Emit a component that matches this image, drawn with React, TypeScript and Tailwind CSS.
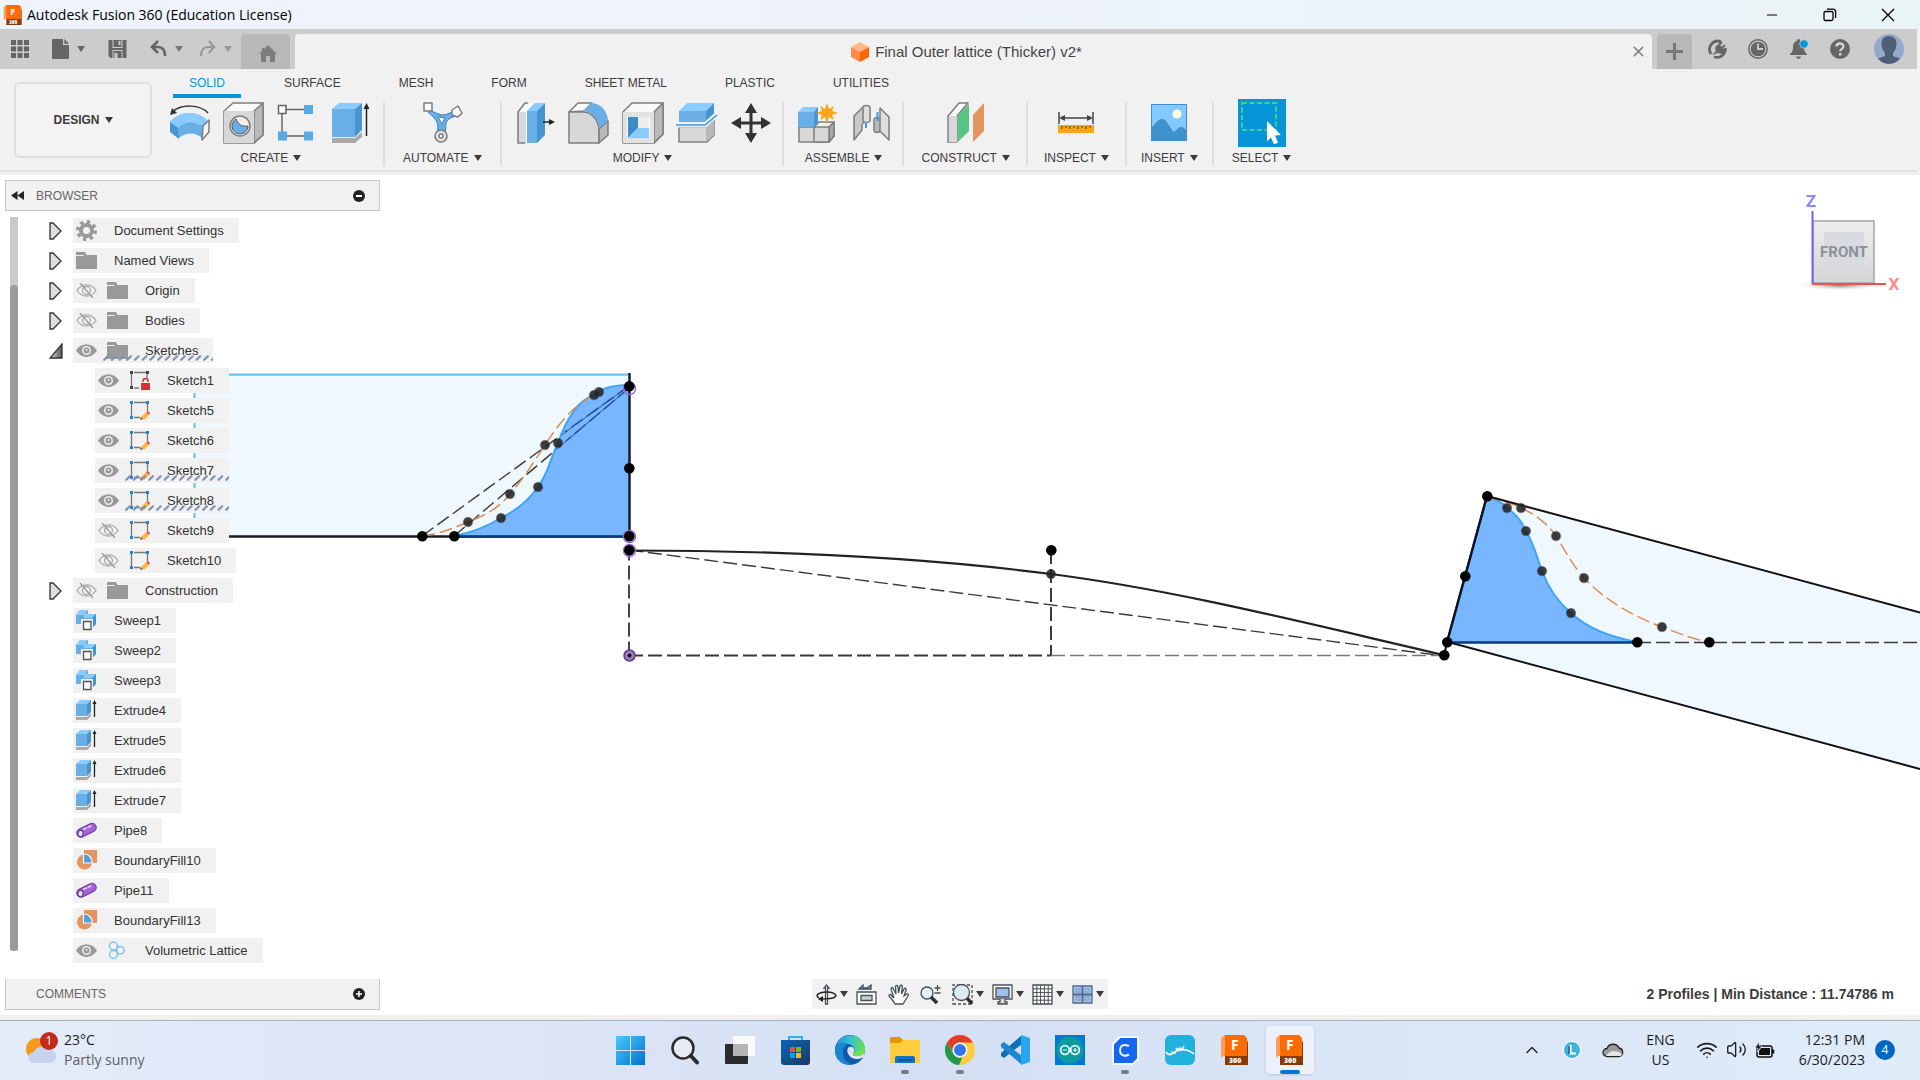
import React, { useState } from 'react';
import { Minus, X, ChevronUp, Wifi, Volume2 } from 'lucide-react';

/* ---------- small shared bits ---------- */

const Caret = ({ className = 'text-[#3c3c3c]' }: { className?: string }) => (
  <svg width="8" height="6" viewBox="0 0 8 6" className={`shrink-0 ${className}`}>
    <path d="M0 0h8L4 6z" fill="currentColor" />
  </svg>
);

const FusionLogo = ({ size }: { size: number }) => (
  <svg width={size} height={size} viewBox="0 0 30 30">
    <path d="M28 5v25H5v-9h18z" fill="#8a3a06" />
    <path d="M4 0h20l3 3v18H4z" fill="#ff6b00" />
    <path d="M1 3 5 0v20l-4 3z" fill="#ff9d5c" />
    <text x="11" y="15" fontSize="14" fontWeight="700" fill="#fff" fontFamily="Open Sans, sans-serif">F</text>
    <text x="9" y="28" fontSize="7" fontWeight="800" fill="#fff" fontFamily="Open Sans, sans-serif">360</text>
  </svg>
);

const Tool = ({ label, children, active }: { label: string; children: React.ReactNode; active?: boolean }) => (
  <button
    type="button"
    aria-label={label}
    className={active ? 'flex w-12 h-12 -my-[3px] items-center justify-center bg-[#0696d7]' : 'flex w-[42px] h-[42px] items-center justify-center'}
  >
    <svg width="42" height="42" viewBox="0 0 42 42" fill="none">{children}</svg>
  </button>
);

const Group = ({ label, children, pad = 'pl-3 pr-2.5', last }: { label: string; children: React.ReactNode; pad?: string; last?: boolean }) => (
  <div className={`flex flex-col items-center h-16 ${pad} ${last ? '' : 'border-r-2 border-[#dedede]'}`}>
    <div className="flex gap-3">{children}</div>
    <button type="button" className="flex items-center gap-[5px] px-1.5 mt-[5px] text-xs leading-[18px] text-[#3c3c3c]">
      {label}
      <Caret />
    </button>
  </div>
);

/* ---------- title bar and document tabs ---------- */

const TitleBar = () => (
  <header className="flex items-center h-[29px] bg-linear-to-r from-[#eff3fb] via-[#eef3fb] to-[#e9f4f6] text-black">
    <span className="pl-[3px] pr-1"><FusionLogo size={20} /></span>
    <h1 className="flex-1 text-[14px] leading-5 font-['Open_Sans',sans-serif]">Autodesk Fusion 360 (Education License)</h1>
    <button type="button" aria-label="Minimize" className="flex w-[58px] justify-center"><Minus size={16} strokeWidth={1.5} /></button>
    <button type="button" aria-label="Restore" className="flex w-[58px] justify-center">
      <svg width="14" height="14" viewBox="0 0 14 14" fill="none" stroke="#000" strokeWidth="1.3">
        <rect x="1" y="3.5" width="9" height="9" rx="1.5" />
        <path d="M4 1.2h6a2.6 2.6 0 0 1 2.6 2.6V10" />
      </svg>
    </button>
    <button type="button" aria-label="Close" className="flex w-[58px] justify-center mr-[3px]">
      <svg width="14" height="14" viewBox="0 0 14 14" stroke="#000" strokeWidth="1.3"><path d="m1 1 12 12M13 1 1 13" /></svg>
    </button>
  </header>
);

const QuickAccess = () => (
  <div className="flex h-10 items-end bg-[#cccccc] mr-[3px] text-[#666]">
    <div className="flex h-10 w-[241px] items-center pl-[11px]">
      <button type="button" aria-label="Data panel" className="mr-[23px]">
        <svg width="18" height="18" viewBox="0 0 18 18" fill="currentColor">
          {[0, 6.5, 13].map(y => [0, 6.5, 13].map(x => <rect key={`${x}-${y}`} x={x} y={y} width="5" height="5" />))}
        </svg>
      </button>
      <button type="button" aria-label="File" className="flex items-center gap-2 mr-[23px]">
        <svg width="17" height="20" viewBox="0 0 17 20" fill="currentColor">
          <path d="M1 0h10v6h6v13a1 1 0 0 1-1 1H1a1 1 0 0 1-1-1V1a1 1 0 0 1 1-1z" />
          <path d="m12.300 0 4.700 4.700h-4.700z" />
        </svg>
        <Caret className="text-[#666]" />
      </button>
      <button type="button" aria-label="Save" className="mr-[23px]">
        <svg width="19" height="18" viewBox="0 0 18 18">
          <path d="M0 0h18v18H2l-2-2z" fill="#666" />
          <path d="M4 0h10v8H4z" fill="#ccc" />
          <path d="M5 0h8v7H5z" fill="#666" />
          <path d="M10 1h2v4h-2zM4 10h10v8H4z" fill="#ccc" />
          <path d="M5 11h8v7H5z" fill="#666" />
          <path d="M6 13h3v5H6z" fill="#ccc" />
        </svg>
      </button>
      <button type="button" aria-label="Undo" className="flex items-center gap-2 mr-4">
        <svg width="17" height="18" viewBox="0 0 17 18" fill="none" stroke="#666" strokeWidth="2.6">
          <path d="M8 1 2 7l6 6M2 7h6c5 0 7 4 7 9" />
        </svg>
        <Caret className="text-[#777]" />
      </button>
      <button type="button" aria-label="Redo" className="flex items-center gap-2">
        <svg width="17" height="18" viewBox="0 0 17 18" fill="none" stroke="#999" strokeWidth="2.2">
          <path d="m10 1 5 6-5 6M15 7H9c-5 0-7 4-7 9" />
        </svg>
        <Caret className="text-[#999]" />
      </button>
    </div>
    <button type="button" aria-label="Home" className="flex w-[49px] h-[35px] items-center justify-center bg-[#b8b8b8] rounded-t pt-1 pl-1">
      <svg width="18" height="18" viewBox="0 0 18 18" fill="#7c7c7c">
        <path d="m9 0 9 9h-2v8H2V9H0l3-3V3h2v1z" />
        <path d="M7 11h4v6H7z" fill="#b8b8b8" />
      </svg>
    </button>
    <div className="flex flex-1 h-[35px] items-center ml-[5px] bg-[#f1f1f1] rounded-t">
      <div className="flex flex-1 items-center justify-center gap-[6px] pl-2 text-[15px] leading-5 text-[#444]">
        <svg width="18" height="20" viewBox="0 0 18 20">
          <path d="m9 0 9 5-9 5-9-5z" fill="#ffb68a" />
          <path d="m0 5 9 5v10l-9-5z" fill="#ff8a45" />
          <path d="m18 5-9 5v10l9-5z" fill="#ff6600" />
        </svg>
        <span>Final Outer lattice (Thicker) v2*</span>
      </div>
      <button type="button" aria-label="Close document" className="mr-[5px] text-[#777]"><X size={17} /></button>
    </div>
    <button type="button" aria-label="New document" className="flex w-[35px] h-[35px] items-center justify-center ml-[5px] bg-[#b8b8b8] rounded-t">
      <svg width="17" height="17" viewBox="0 0 17 17"><path d="M7 0h3v7h7v3h-7v7H7v-7H0V7h7z" fill="#777" /></svg>
    </button>
    <div className="flex h-10 items-center gap-[21px] pl-[15px] pr-[13px]">
      <button type="button" aria-label="Extensions">
        <svg width="20" height="20" viewBox="0 0 20 20" fill="none" stroke="#666">
          <path d="M4 15A8.300 8.300 0 0 1 14 2.700M18.300 9A8.300 8.300 0 0 1 7 17.800" strokeWidth="2.800" />
          <path d="m5 16 4-4c-2-4 1-7 4-6l4 4c1 4-3 6-6 4" fill="#666" stroke="none" />
          <path d="m11 7 4-4M14 10l4-4" strokeWidth="2" />
        </svg>
      </button>
      <button type="button" aria-label="Job status">
        <svg width="20" height="20" viewBox="0 0 20 20">
          <circle cx="10" cy="10" r="9.200" fill="none" stroke="#666" strokeWidth="1.5" />
          <circle cx="10" cy="10" r="7.300" fill="#666" />
          <path d="M10 4.500V10h5" fill="none" stroke="#ccc" strokeWidth="1.8" />
        </svg>
      </button>
      <button type="button" aria-label="Notifications">
        <svg width="20" height="20" viewBox="0 0 20 20">
          <path d="M9.500 0c1 0 1.500.7 1.500 1.800 3 .8 4 3.200 4 6.200 0 4 1 5 3 7v1H1v-1c2-2 3-3 3-7 0-3 1-5.400 4-6.200C8 .7 8.500 0 9.500 0zM7 17.500h5c-.4 1.700-1.300 2.300-2.500 2.300S7.400 19.200 7 17.500z" fill="#666" />
          <circle cx="15" cy="5" r="4.200" fill="#0696d7" stroke="#ccc" strokeWidth=".8" />
        </svg>
      </button>
      <button type="button" aria-label="Help">
        <svg width="20" height="20" viewBox="0 0 20 20">
          <circle cx="10" cy="10" r="10" fill="#666" />
          <path d="M6.500 7.500C6.500 3.500 13.500 3.600 13.500 7.300c0 2.500-3.300 2.600-3.300 5M10.200 14v2.500" fill="none" stroke="#d6d6d6" strokeWidth="2.3" />
        </svg>
      </button>
      <button type="button" aria-label="Account" className="ml-[3px]">
        <svg width="30" height="30" viewBox="0 0 30 30">
          <circle cx="15" cy="15" r="15" fill="#94a9cb" />
          <path d="M15 2c5 0 7.500 3 7.500 8 0 4-1.500 7-3.500 9v3l7 2.500A15 15 0 0 1 15 30 15 15 0 0 1 4 24.500L11 22v-3c-2-2-3.500-5-3.500-9 0-5 2.500-8 7.500-8z" fill="#4d6078" />
        </svg>
      </button>
    </div>
  </div>
);

/* ---------- ribbon ---------- */

const tabs = ['SOLID', 'SURFACE', 'MESH', 'FORM', 'SHEET METAL', 'PLASTIC', 'UTILITIES'];

const edge = { stroke: '#7d7d7d', strokeWidth: 1.5, strokeLinejoin: 'round' as const };

const Ribbon = () => {
  const [tab, setTab] = useState('SOLID');
  return (
    <div className="flex h-[106px] bg-[#f1f1f1]">
      <div className="flex flex-1 h-[103px] mr-[3px] border-b-2 border-[#e3e3e3]">
        <button type="button" className="flex shrink-0 w-[138px] h-[76px] ml-3.5 mt-[13px] items-center justify-center gap-[5px] rounded-md border-2 border-[#dedede] bg-[#f3f3f3] text-xs font-bold text-[#3c3c3c]">
          DESIGN
          <Caret />
        </button>
        <div className="ml-[5px]">
          <nav className="flex gap-7 pl-4">
            {tabs.map(t => (
              <button
                key={t}
                type="button"
                onClick={() => setTab(t)}
                className={`h-[29px] px-[15px] pt-0.5 first:min-w-[68px] text-xs border-b-4 ${t === tab ? 'border-[#0696d7] text-[#0696d7]' : 'border-transparent text-[#3c3c3c]'}`}
              >
                {t}
              </button>
            ))}
          </nav>
          <div className="flex mt-1">
            <Group label="CREATE">
              <Tool label="Form">
                <path d="M39 11C31 2 12 2 3 10" stroke="#333" strokeWidth="1.5" />
                <path d="m1 13 2-7 5 5z" fill="#333" />
                <path d="M1 20c10-11 26-12 37-2l-5 18c-7-6-16-6-23 0z" fill="#69afe5" />
                <path d="M1 20c10-11 26-12 37-2l-5 6c-9-5-17-5-24 2z" fill="#8accff" />
                <path d="m1 20 8 6 1 11-9-7z" fill="#4695d0" />
                <path d="m34 24 6-6v12l-7 8z" fill="#f6f6f6" {...edge} />
              </Tool>
              <Tool label="Hole">
                <path d="M1 9 10 1h30v32l-9 8H1z" fill="#fafafa" {...edge} />
                <path d="M31 9 40 1v32l-9 8z" fill="#b9b9b9" {...edge} />
                <path d="M1 9h30v32H1z" fill="#d8d8d8" />
                <circle cx="17" cy="24" r="10" fill="#eee" {...edge} />
                <path d="M13 17a8 8 0 1 0 12 7c-7 1-10-2-12-7z" fill="#69afe5" stroke="#555" />
              </Tool>
              <Tool label="Pattern">
                <path d="M9 7.500h19M5 12v18M9 34h19" stroke="#666" strokeWidth="1.5" />
                <rect x="1.500" y="3.500" width="7.500" height="8" fill="#fafafa" stroke="#666" strokeWidth="1.5" />
                <path d="M27 3h9v9h-9zM27 29.500h9v9h-9zM1 29.500h9v9H1z" fill="#5ba9e3" />
              </Tool>
              <Tool label="Extrude">
                <path d="M1 36h23l7-6v5l-7 6H1z" fill="#a9a9a9" />
                <path d="M1 7h23v28H1z" fill="#69afe5" />
                <path d="m1 7 7-6h23l-7 6z" fill="#8accff" />
                <path d="m24 7 7-6v27l-7 7z" fill="#4695d0" />
                <path d="M35.500 34V5" stroke="#222" strokeWidth="1.5" />
                <path d="m35.500 1 3 6h-6z" fill="#222" />
              </Tool>
            </Group>
            <Group label="AUTOMATE" pad="px-3">
              <Tool label="Automated modeling">
                <path d="M8 8c5 2 9 4 13 5 4 0 8-2 12-4l2 5c-6 2-9 3-10 8l-1 12h-8c2-13 1-15-9-24z" fill="#69afe5" stroke="#3e86c0" />
                <path d="m17 15 7 1-3 6z" fill="#f1f1f1" stroke="#3e86c0" />
                <circle cx="20" cy="34" r="6" fill="#e2e2e2" {...edge} />
                <circle cx="20" cy="34" r="2" fill="#fff" {...edge} />
                <path d="M3 1h8v8H3zM37 4l4 7-4 4-6-2v-5z" fill="#fafafa" {...edge} />
              </Tool>
            </Group>
            <Group label="MODIFY">
              <Tool label="Press pull">
                <path d="m4 10 8-9h8l-7 8v32H4z" fill="#fafafa" />
                <path d="M4 10h8v31H4z" fill="#d8d8d8" />
                <path d="M14 1h-3l-7 9v31h7" {...edge} />
                <path d="m13 9 8-8h10l-8 8z" fill="#8accff" />
                <path d="M13 9h10v32H13z" fill="#69afe5" />
                <path d="m23 9 8-8v32l-8 8z" fill="#4695d0" />
                <path d="M29 20h8" stroke="#222" strokeWidth="1.5" />
                <path d="m41 20-6-3v6z" fill="#222" />
              </Tool>
              <Tool label="Fillet">
                <path d="m1 10 9-9h14l-8 8z" fill="#fafafa" {...edge} />
                <path d="M1 10h14c10 0 15 9 16 17v14H1z" fill="#d8d8d8" {...edge} />
                <path d="m31 27 9-8v14l-9 8z" fill="#b9b9b9" {...edge} />
                <path d="m15 9 8-8c10 0 17 9 17 18l-9 7c-1-9-6-16-16-17z" fill="#69afe5" />
              </Tool>
              <Tool label="Shell">
                <path d="M1 10 10 1h31v31l-9 9H1z" fill="#fafafa" {...edge} />
                <path d="m32 10 9-9v31l-9 9z" fill="#b9b9b9" {...edge} />
                <path d="M1 10h31v31H1z" fill="#e2e2e2" />
                <path d="M5 15h23v21H5z" fill="#fff" />
                <path d="M6 15h10v11L6 36z" fill="#3f8bc6" />
                <path d="M6 36 16 26h11v10z" fill="#8accff" />
                <path d="M16 15h11v11H16z" fill="#ededed" />
              </Tool>
              <Tool label="Split body">
                <path d="M3 25h27l8-7v15l-7 7H3z" fill="#d8d8d8" {...edge} />
                <path d="m30 25 8-7v15l-8 7z" fill="#b9b9b9" />
                <path d="m3 9 8-8h27l-8 8z" fill="#8accff" />
                <path d="M3 9h27v11H3z" fill="#69afe5" />
                <path d="m30 9 8-8v11l-8 8z" fill="#4695d0" />
                <path d="M0 23h29L41 12" stroke="#f1f1f1" strokeWidth="5" />
                <path d="M0 23h29L41 13" stroke="#3f98e0" strokeWidth="1.6" />
              </Tool>
              <Tool label="Move">
                <path d="M21 8v26M8 21h26" stroke="#333" strokeWidth="3" />
                <path d="m21 1 6 10H15zM21 41l6-10H15zM1 21l10-6v12zM41 21l-10-6v12z" fill="#333" />
              </Tool>
            </Group>
            <Group label="ASSEMBLE">
              <Tool label="New component">
                <path d="m18 25 5-5h15v14l-5 6H18z" fill="#f0f0f0" {...edge} />
                <path d="m33 25 5-5v14l-5 6z" fill="#a9a9a9" {...edge} />
                <path d="M3 25h15v15H3zM18 25h15v15H18z" fill="#d8d8d8" {...edge} />
                <path d="M2 10h16v15H2z" fill="#69afe5" />
                <path d="m2 10 5-5h15l-4 5z" fill="#8accff" />
                <path d="m18 10 4-5v15l-4 5z" fill="#4695d0" />
                <path d="m31 1 2 6 5-3-2 5 6 2-6 2 2 5-5-3-2 6-2-6-5 3 2-5-6-2 6-2-2-5 5 3z" fill="#f9a51a" />
              </Tool>
              <Tool label="Joint">
                <path d="M4 14 14 4h4v14l-6 4v6l-8 10z" fill="#c9c9c9" {...edge} />
                <path d="M13 5c1-2 6-2 7 0v14c-2 2-5 2-7 0z" fill="#dedede" {...edge} />
                <path d="M30 6 39 15v23l-8-8h-5V17h4z" fill="#dedede" {...edge} />
                <path d="M24 17c1-2 5-2 6 0v12c-2 2-5 2-6 0z" fill="#b9b9b9" {...edge} />
                <path d="M16 20v6M27.500 10v9" stroke="#3f98e0" strokeWidth="2" />
              </Tool>
            </Group>
            <Group label="CONSTRUCT">
              <Tool label="Offset plane">
                <path d="m3 14 11-13h9L12 14v26H3z" fill="#fafafa" {...edge} />
                <path d="M4 14h8v26H4z" fill="#d8d8d8" />
                <path d="m13 13 11-11v27L13 40z" fill="#58c482" />
                <path d="m28 13 11-12v28L28 40z" fill="#e5945f" />
              </Tool>
            </Group>
            <Group label="INSPECT" pad="px-2.5">
              <Tool label="Measure">
                <path d="M4 10v12M38 10v12M8 16h26" stroke="#444" strokeWidth="1.5" />
                <path d="m4 16 6-3v6zM38 16l-6-3v6z" fill="#444" />
                <path d="M3 23h36v8H3z" fill="#f9a51a" />
                <path d="M7 24v3M11 24v2M15 24v3M19 24v2M23 24v3M27 24v2M31 24v3M35 24v2" stroke="#704800" strokeWidth="1.2" />
              </Tool>
            </Group>
            <Group label="INSERT" pad="px-2">
              <Tool label="Insert image">
                <path d="M3 2h36v37H3z" fill="#82caff" />
                <path d="M3 27c4-6 8-10 11-10 5 0 7 8 12 13 3-3 5-5 7-5s4 2 6 4v10H3z" fill="#4090cb" />
                <circle cx="29" cy="12" r="4.500" fill="#ffffdc" />
                <path d="M3.500 2.500h35v36h-35z" stroke="#3f8fcb" />
              </Tool>
            </Group>
            <Group label="SELECT" last>
              <Tool label="Select" active>
                <path d="M1 1h34v27H1z" stroke="#3fd08c" strokeWidth="2" strokeDasharray="5 2.5" />
                <path d="m26 19 14 14-6 .5 3 7-4 2-3-7-4 4z" fill="#fff" />
              </Tool>
            </Group>
          </div>
        </div>
      </div>
    </div>
  );
};

/* ---------- browser tree ---------- */

type IconName = 'gear' | 'folder' | 'locked' | 'sketch' | 'sweep' | 'extrude' | 'pipe' | 'fill' | 'lattice';

interface Node {
  name: string;
  icon: IconName;
  eye?: 'on' | 'off';
  child?: boolean;
  toggle?: 'open' | 'closed';
  hatched?: boolean;
}

const nodes: Node[] = [
  { name: 'Document Settings', icon: 'gear', toggle: 'closed' },
  { name: 'Named Views', icon: 'folder', toggle: 'closed' },
  { name: 'Origin', icon: 'folder', eye: 'off', toggle: 'closed' },
  { name: 'Bodies', icon: 'folder', eye: 'off', toggle: 'closed' },
  { name: 'Sketches', icon: 'folder', eye: 'on', toggle: 'open', hatched: true },
  { name: 'Sketch1', icon: 'locked', eye: 'on', child: true },
  { name: 'Sketch5', icon: 'sketch', eye: 'on', child: true },
  { name: 'Sketch6', icon: 'sketch', eye: 'on', child: true },
  { name: 'Sketch7', icon: 'sketch', eye: 'on', child: true, hatched: true },
  { name: 'Sketch8', icon: 'sketch', eye: 'on', child: true, hatched: true },
  { name: 'Sketch9', icon: 'sketch', eye: 'off', child: true },
  { name: 'Sketch10', icon: 'sketch', eye: 'off', child: true },
  { name: 'Construction', icon: 'folder', eye: 'off', toggle: 'closed' },
  { name: 'Sweep1', icon: 'sweep' },
  { name: 'Sweep2', icon: 'sweep' },
  { name: 'Sweep3', icon: 'sweep' },
  { name: 'Extrude4', icon: 'extrude' },
  { name: 'Extrude5', icon: 'extrude' },
  { name: 'Extrude6', icon: 'extrude' },
  { name: 'Extrude7', icon: 'extrude' },
  { name: 'Pipe8', icon: 'pipe' },
  { name: 'BoundaryFill10', icon: 'fill' },
  { name: 'Pipe11', icon: 'pipe' },
  { name: 'BoundaryFill13', icon: 'fill' },
  { name: 'Volumetric Lattice', icon: 'lattice', eye: 'on' },
];

const treeIcons: Record<IconName, React.ReactNode> = {
  gear: (
    <>
      <circle cx="10.500" cy="10.500" r="8.500" stroke="#999" strokeWidth="4" strokeDasharray="3.34" />
      <circle cx="10.500" cy="10.500" r="5.500" stroke="#999" strokeWidth="4" />
    </>
  ),
  folder: <path d="M0 2h9l1.500 3H21v14H0V6h8l-1-1H0z" fill="#999" />,
  locked: (
    <>
      <path d="M2.500 4v12M5 2.500h12M18 4v4M5 18h5" stroke="#777" strokeWidth="1.3" />
      <path d="M1 1h3v3H1zM17 1h3v3h-3zM1 16h3v3H1z" fill="#444" />
      <path d="M14 12v-1a2.500 2.500 0 0 1 5 0v1" stroke="#d13438" strokeWidth="1.5" />
      <path d="M12 13h9v7h-9z" fill="#d13438" />
    </>
  ),
  sketch: (
    <>
      <path d="M2.500 4v12M5 2.500h12M18.500 4v7M5 17.500h6" stroke="#777" strokeWidth="1.3" />
      <path d="M1 1h3v3H1zM17 1h3v3h-3zM1 16h3v3H1z" fill="#1a84d8" />
      <path d="m12 17 5-5 3 3-5 5z" fill="#fdb83a" />
      <path d="m17 12 2-1 2 2-1 2z" fill="#e8484c" />
      <path d="m11 20 1-3 2 2z" fill="#555" />
    </>
  ),
  sweep: (
    <>
      <path d="M0 5 4 0h8v4h8v10l-4 4H6v-4H0z" fill="#69afe5" />
      <path d="M0 5 4 0h8L9 4h11l-3 4H8V5z" fill="#8accff" />
      <path d="m16 8 4-4v10l-4 4z" fill="#4695d0" />
      <path d="M6.500 10.500h9v9h-9z" fill="#f8f8f8" stroke="#f1f1f1" strokeWidth="3" />
      <path d="M7.500 11.500h7.500v8H7.500z" fill="#f8f8f8" stroke="#555" strokeWidth="1.3" />
    </>
  ),
  extrude: (
    <>
      <path d="M0 17h11l4-4v3l-4 4H0z" fill="#a9a9a9" />
      <path d="M0 4h11v12H0z" fill="#69afe5" />
      <path d="m0 4 4-4h11l-4 4z" fill="#8accff" />
      <path d="m11 4 4-4v12l-4 4z" fill="#4695d0" />
      <path d="M18.500 17V3" stroke="#222" strokeWidth="1.3" />
      <path d="m18.500 0 2 4h-4z" fill="#222" />
    </>
  ),
  pipe: (
    <>
      <path d="M5 13 16 7.500" stroke="#6a3a9a" strokeWidth="9.5" strokeLinecap="round" />
      <path d="M5 13 16 7.500" stroke="#a465d4" strokeWidth="7.5" strokeLinecap="round" />
      <path d="M7 9.500 16 5.500" stroke="#e6cbf8" strokeWidth="1.8" strokeDasharray="4 1" />
      <ellipse cx="4.500" cy="13.500" rx="2.500" ry="3.200" fill="#efe0fa" stroke="#5b2d86" transform="rotate(15 4.5 13.5)" />
    </>
  ),
  fill: (
    <>
      <path d="M8 0h13v13h-6L8 6z" fill="#e5945f" />
      <circle cx="8.500" cy="12" r="7.500" fill="#e5945f" />
      <path d="M7.500 4a8 8 0 0 1 8.500 9H7.500z" fill="#4f9fd8" stroke="#f6f6f6" strokeWidth="1.2" />
    </>
  ),
  lattice: (
    <g stroke="#7cc3f5" strokeWidth="1.5">
      <circle cx="6.500" cy="6" r="4" />
      <circle cx="6.500" cy="14.500" r="4" />
      <circle cx="13.500" cy="10.200" r="3.800" />
    </g>
  ),
};

const Eye = ({ state }: { state: 'on' | 'off' }) => (
  <svg width="21" height="15" viewBox="0 0 21 15" fill="none">
    {state === 'on' ? (
      <>
        <path d="M0 7.500C5-1 16-1 21 7.500 16 16 5 16 0 7.500z" fill="#999" />
        <circle cx="10.500" cy="7.500" r="4.500" fill="#eee" />
        <circle cx="10.500" cy="7.500" r="3" fill="#999" />
        <circle cx="10.500" cy="7" r="1" fill="#eee" />
      </>
    ) : (
      <g stroke="#aaa" strokeWidth="1.3">
        <path d="M1 7.500C6 0 15 0 20 7.500 15 15 6 15 1 7.500z" />
        <circle cx="10.500" cy="7.500" r="4" />
        <path d="m4 0 13 15" stroke="#999" />
      </g>
    )}
  </svg>
);

const TreeRow = ({ node }: { node: Node }) => (
  <li className="flex h-[25px] items-center">
    <span className="flex w-[24px] shrink-0">
      {node.toggle && (
        <button type="button" aria-label={`Toggle ${node.name}`}>
          {node.toggle === 'closed' ? (
            <svg width="14" height="18" viewBox="0 0 14 18"><path d="M1 1h3l8 8-8 8H1z" fill="#ddd" stroke="#333" strokeWidth="1.3" /></svg>
          ) : (
            <svg width="14" height="16" viewBox="0 0 14 16">
              <defs><linearGradient id="tri" x1="0" x2="1"><stop stopColor="#ddd" /><stop offset="1" stopColor="#555" /></linearGradient></defs>
              <path d="M13 1v14H1z" fill="url(#tri)" stroke="#333" strokeWidth="1.3" />
            </svg>
          )}
        </button>
      )}
    </span>
    <div className={`relative flex h-[25px] items-center bg-[#f1f1f1] pl-[3px] pr-[15px] ${node.child ? 'ml-[22px]' : ''}`}>
      {node.eye && <button type="button" aria-label={`Visibility of ${node.name}`} className="mr-2.5"><Eye state={node.eye} /></button>}
      <svg width="21" height="21" viewBox="0 0 21 21" fill="none" className="mr-[17px]">{treeIcons[node.icon]}</svg>
      <span className="text-[13px] leading-5 whitespace-nowrap text-[#333]">{node.name}</span>
      {node.hatched && (
        <svg className="absolute left-[30px] right-0 bottom-[2px] w-[calc(100%-30px)] h-[6px]">
          <defs>
            <pattern id={`hatch-${node.name}`} width="7.700" height="6" patternUnits="userSpaceOnUse">
              <path d="m1.200 4.800 3.600-3.600" stroke="#7f8fb0" strokeWidth="2.2" strokeLinecap="round" />
            </pattern>
          </defs>
          <rect width="100%" height="6" fill={`url(#hatch-${node.name})`} />
        </svg>
      )}
    </div>
  </li>
);

const BrowserPanel = () => (
  <aside className="relative w-[375px]">
    <div className="flex h-[31px] items-center border border-[#c8c8c8] bg-[#f1f1f1] pl-[5px] pr-3.5 text-xs text-[#666]">
      <button type="button" aria-label="Collapse browser">
        <svg width="13" height="9" viewBox="0 0 13 9"><path d="M6.500 0v9L0 4.500zM13 0v9L6.500 4.500z" fill="#222" /></svg>
      </button>
      <h2 className="flex-1 ml-3">BROWSER</h2>
      <button type="button" aria-label="Hide browser">
        <svg width="12" height="12" viewBox="0 0 12 12"><circle cx="6" cy="6" r="6" fill="#222" /><path d="M3 6h6" stroke="#fff" strokeWidth="2" /></svg>
      </button>
    </div>
    <div className="flex mt-[6px]">
      <div className="flex flex-col w-2 ml-[5px] mb-3 bg-[#c9cacb]">
        <div className="flex-1 mt-[68px] rounded-full bg-[#999a9b]" />
      </div>
      <ul className="flex flex-col gap-[5px] pl-[31px] pt-px">
        {nodes.map(n => <TreeRow key={n.name} node={n} />)}
      </ul>
    </div>
  </aside>
);

/* ---------- sketch canvas ---------- */

const solidPoints = [[422, 536], [454, 536], [629, 468], [629, 386], [629, 536], [629, 550], [1051, 550], [1444, 655], [1447, 642], [1465, 576], [1487, 496], [1637, 642], [1709, 642]];
const softPoints = [[468, 522], [510, 494], [545, 445], [594, 395], [599, 392], [501, 518], [538, 487], [558, 443], [1051, 574], [1507, 508], [1526, 531], [1542, 571], [1571, 613], [1521, 508], [1556, 536], [1584, 578], [1662, 627]];

const leftProfile = 'M454 536C475 532 488 526 501 518C517 510 529 500 538 487C549 472 550 459 558 443C566 420 577 401 594 395C603 387 615 385 629 385';
const rightProfile = 'M1487 497C1496 499 1502 502 1507 508C1516 514 1522 522 1526 531C1534 544 1537 558 1542 571C1549 590 1558 602 1571 613C1588 629 1610 637 1637 642';

const SketchCanvas = () => (
  <svg className="absolute inset-0 w-full h-full" viewBox="0 175 1920 840" preserveAspectRatio="xMidYMid slice" fill="none">
    <path d="M195 375h434v161H195z" fill="#f0f8ff" />
    <path d="M1487 496 1920 612v157L1448 642z" fill="#f0f8ff" />
    <path d="M195 374.700h434" stroke="#6cc5ea" strokeWidth="2.2" />
    <path d="M194.500 385v150" stroke="#6cc5ea" strokeWidth="2.2" strokeDasharray="20 10" />
    <circle cx="215" cy="538" r="5" fill="#d9c2f5" />
    <path d="M215 536.500h414" stroke="#1b1b22" strokeWidth="2.5" />
    <g stroke="#3a3a3a" strokeWidth="1.4" strokeDasharray="14 5">
      <path d="M422 536 629 386M454 536 629 388" />
      <path d="M629 550 1444 656" />
      <path d="M629 655.500V550" stroke="#4b3f5c" strokeWidth="2" />
      <path d="M1051 550v106M629 655.500h422" strokeWidth="2" />
      <path d="M1051 655.500h393" stroke="#777" />
      <path d="M1637 642.500h283" />
    </g>
    <path d={`${leftProfile}V536z`} fill="#4a9dff" fillOpacity=".72" stroke="none" />
    <path d={`${rightProfile}H1448z`} fill="#4a9dff" fillOpacity=".72" stroke="none" />
    <g stroke="#1d4f94" strokeWidth="1.4">
      <path d="M629 386 565 432M629 388 566 441" strokeDasharray="14 5" />
    </g>
    <path d={leftProfile} stroke="#3fa4f5" strokeWidth="2" />
    <path d={rightProfile} stroke="#3fa4f5" strokeWidth="2" />
    <g stroke="#dd8c50" strokeWidth="1.5" strokeDasharray="13 5">
      <path d="M422 536C440 534 454 528 468 522C486 515 499 508 510 494C524 478 533 463 545 445C561 420 575 405 594 395" />
      <path d="M1487 497C1500 500 1512 503 1521 508C1535 514 1548 524 1556 536C1566 552 1573 566 1584 578C1604 599 1630 615 1662 627C1678 633 1692 639 1709 642" />
    </g>
    <path d="M629 550.500C770 550.500 911 556 1051 574C1182 591 1313 625 1444 655" stroke="#222" strokeWidth="2.2" />
    <path d="M629.500 373v163" stroke="#141a30" strokeWidth="2.5" />
    <path d="M454 536.500h175M1487 496l-40 146.500h190" stroke="#0a3c7c" strokeWidth="2.5" />
    <path d="m1487 496-40 146-3 14M1487 496l433 116.500M1448 642l472 127" stroke="#111" strokeWidth="2" />
    <g stroke="#9a63d8" strokeWidth="1.5">
      <circle cx="629.500" cy="388.500" r="6" />
      <circle cx="629.500" cy="536.500" r="6" />
      <circle cx="629.500" cy="550.500" r="6" />
      <circle cx="629.500" cy="655.500" r="5.500" fill="#9a7cc0" stroke="#5a3c86" />
    </g>
    <circle cx="629.500" cy="655.500" r="2" fill="#111" />
    {softPoints.map(([x, y]) => <circle key={`${x},${y}`} cx={x} cy={y} r="4.500" fill="#222" fillOpacity=".88" stroke="#333" strokeOpacity=".4" strokeWidth="1.5" />)}
    {solidPoints.map(([x, y]) => <circle key={`${x},${y}`} cx={x + 0.3} cy={y + 0.3} r="5.300" fill="#000" />)}
  </svg>
);

const ViewCube = () => (
  <svg width="120" height="110" viewBox="1790 190 120 110" className="absolute right-[10px] top-[15px]">
    <defs>
      <linearGradient id="cube" x1="0" y1="0" x2="0" y2="1"><stop stopColor="#ededed" /><stop offset="1" stopColor="#d5d5d5" /></linearGradient>
      <radialGradient id="shade"><stop stopColor="#777" /><stop offset="1" stopColor="#fff" stopOpacity="0" /></radialGradient>
    </defs>
    <ellipse cx="1840" cy="285" rx="46" ry="6" fill="url(#shade)" />
    <path d="M1813 221h61v62h-61z" fill="url(#cube)" stroke="#a5a5a5" strokeWidth="1.5" />
    <path d="M1824 232h40v40h-40z" fill="#d9dbe0" />
    <path d="M1812.500 211v73" stroke="#6a66f0" strokeWidth="2" />
    <path d="M1812 284h74" stroke="#f05050" strokeWidth="2" />
    <text x="1844" y="257" textAnchor="middle" fontSize="15" fontWeight="700" fill="#8d9199" fontFamily="Roboto, sans-serif">FRONT</text>
    <text x="1811" y="207" textAnchor="middle" fontSize="17" fontWeight="700" fill="#8d88ff" fontFamily="Roboto, sans-serif">Z</text>
    <text x="1894" y="290" textAnchor="middle" fontSize="17" fontWeight="700" fill="#ff8a8a" fontFamily="Roboto, sans-serif">X</text>
  </svg>
);

/* ---------- bottom row of the canvas ---------- */

const NavIcon = ({ label, children, menu }: { label: string; children: React.ReactNode; menu?: boolean }) => (
  <button type="button" aria-label={label} className={`flex items-center gap-[3px] ${menu ? '' : 'pr-[3px]'}`}>
    <svg width="21" height="21" viewBox="0 0 21 21" fill="none" stroke="#4a4f57" strokeWidth="1.3">{children}</svg>
    {menu && <Caret />}
  </button>
);

const NavBar = () => (
  <div className="flex h-[30px] items-center self-start gap-2 bg-[#f1f1f1] px-1">
    <NavIcon label="Orbit" menu>
      <path d="M10.500 1 8 4h1.500v16h2V4H13z" fill="#fff" />
      <path d="M3 14c-5-3 1-6 7-6s12 2 9 5c-2 2-7 2-15 2" stroke="#222" strokeWidth="1.6" />
      <path d="m2 15 5-3v6z" fill="#222" stroke="none" />
    </NavIcon>
    <NavIcon label="Look at">
      <path d="M1 8h19v12H1z" fill="#fff" />
      <path d="M5 11.500h11v5H5z" fill="#ccd2d8" />
      <path d="m3 5 4-4v3h4l4-3v4z" fill="#aab" />
    </NavIcon>
    <NavIcon label="Pan">
      <path d="M7 20c-2-4-4-6-6-8 0-2 2-2 3 0l2 2-3-9c0-2 2-2 2.500 0L8 10 7.500 3c0-2 2-2 2.500 0l.500 6 1.500-7c.500-1.500 2.500-1 2.300.5L13.500 10 16 5c1-1.500 2.500-.5 2 1l-2 6 3-2c1.500 0 1.500 1 1 2-2 3-3 5-5 8z" fill="#fff" />
    </NavIcon>
    <NavIcon label="Zoom">
      <circle cx="7" cy="9" r="6" fill="#e2f0f2" />
      <path d="m11 13 6 6" stroke="#333" strokeWidth="3.5" />
      <path d="M17.500 1v6M14.500 4h6M14.500 9h6" />
    </NavIcon>
    <NavIcon label="Zoom window" menu>
      <path d="M1 20h19V1H1z" strokeDasharray="3 2" />
      <circle cx="9.500" cy="8.500" r="8" fill="#dcebee" />
      <path d="m15 14 5 6" stroke="#333" strokeWidth="3.5" />
    </NavIcon>
    <NavIcon label="Display settings" menu>
      <path d="M1 1h19v14H1z" fill="#fff" />
      <path d="M4 4h13v9H4z" fill="#9fc0ea" />
      <path d="M8 15v3H6v2h9v-2h-2v-3" fill="#ddd" />
    </NavIcon>
    <NavIcon label="Grid settings" menu>
      <path d="M1 1h19v19H1z" fill="#fff" />
      <path d="M4.800 1v19M8.600 1v19M12.400 1v19M16.200 1v19M1 4.800h19M1 8.600h19M1 12.400h19M1 16.200h19" strokeWidth="1" />
    </NavIcon>
    <NavIcon label="Viewports" menu>
      <path d="M1 2h19v17H1z" fill="#a7c3e8" stroke="#50688e" />
      <path d="M10.500 2v17M1 10.500h19" stroke="#50688e" strokeWidth="1.8" />
      <path d="M4 5h4v3H4zM13 5h4v3h-4zM4 13h4v3H4zM13 13h4v3h-4z" stroke="#86a3cc" />
    </NavIcon>
  </div>
);

const CanvasFooter = () => (
  <div className="relative grid grid-cols-[1fr_auto_1fr] items-center">
    <div className="flex w-[375px] h-[31px] items-center border border-t-0 border-[#c8c8c8] bg-[#f1f1f1] pl-[30px] pr-3.5 text-xs text-[#666]">
      <h2 className="flex-1">COMMENTS</h2>
      <button type="button" aria-label="Show comments">
        <svg width="12" height="12" viewBox="0 0 12 12"><circle cx="6" cy="6" r="6" fill="#222" /><path d="M3 6h6M6 3v6" stroke="#fff" strokeWidth="1.5" /></svg>
      </button>
    </div>
    <NavBar />
    <p className="text-right pr-[21px] text-[14px] font-bold text-[#3c3c3c]">2 Profiles | Min Distance : 11.74786 m</p>
  </div>
);

/* ---------- taskbar ---------- */

const apps: { name: string; state?: 'running' | 'active'; icon: React.ReactNode }[] = [
  {
    name: 'Start',
    icon: (
      <>
        <linearGradient id="win" x1="0" y1="0" x2="1" y2="1"><stop stopColor="#4cc8fb" /><stop offset="1" stopColor="#0072d0" /></linearGradient>
        <path d="M1 1h14v14H1zM16 1h14v14H16zM1 16h14v14H1zM16 16h14v14H16z" fill="url(#win)" />
      </>
    ),
  },
  {
    name: 'Search',
    icon: (
      <g fill="none" stroke="#2b2b2b">
        <circle cx="13" cy="13" r="10.500" strokeWidth="2.5" fill="#e6ebf6" />
        <path d="m21 21 6 6.500" strokeWidth="4" strokeLinecap="round" />
      </g>
    ),
  },
  {
    name: 'Task view',
    icon: (
      <>
        <rect x="0" y="9" width="23" height="20" rx="1" fill="#2b2b2b" />
        <rect x="8" y="1" width="22" height="20" rx="1" fill="#fafafa" />
        <path d="M8 9h15v12H8z" fill="#b5b5b5" />
      </>
    ),
  },
  {
    name: 'Microsoft Store',
    icon: (
      <>
        <linearGradient id="store" x1="0" y1="0" x2="1" y2="1"><stop stopColor="#0b66b8" /><stop offset="1" stopColor="#1c3763" /></linearGradient>
        <path d="M9 6V2h13v4" fill="none" stroke="#29b6ef" strokeWidth="2" />
        <path d="M1 5h29v22a3 3 0 0 1-3 3H4a3 3 0 0 1-3-3z" fill="url(#store)" />
        <path d="M10 12h5v5h-5z" fill="#f25022" />
        <path d="M16 12h5v5h-5z" fill="#7fba00" />
        <path d="M10 18h5v5h-5z" fill="#00a4ef" />
        <path d="M16 18h5v5h-5z" fill="#ffb900" />
      </>
    ),
  },
  {
    name: 'Edge',
    icon: (
      <>
        <linearGradient id="edge-top" x1="0" x2="1"><stop stopColor="#1c93d2" /><stop offset=".5" stopColor="#35c1d0" /><stop offset="1" stopColor="#6fe04d" /></linearGradient>
        <circle cx="15" cy="15" r="15" fill="#0f5aa8" />
        <path d="M1 10C5-2 28-5 30 14c0 6-4 7-9 7-4 0-3-2-2-3 2-5-3-10-9-9-4 0-7 1-9 1z" fill="url(#edge-top)" />
        <path d="M0 16c0-8 7-9 12-7-4 3-5 9-3 14 2 4 6 6 9 7C9 31 0 26 0 16z" fill="#1b84d4" />
        <path d="M19 17c1-4-2-6-5-5-3 2-2 8 3 11 4 2 8 1 12-1l1-8c0 6-4 7-9 7-4 0-3-2-2-4z" fill="#dbe3f6" />
        <path d="M30 12c1 7-3 9-9 9-4 0-3-2-2-3" fill="#6fe04d" />
      </>
    ),
  },
  {
    name: 'File Explorer',
    state: 'running',
    icon: (
      <>
        <path d="M0 3a1 1 0 0 1 1-1h9l3 3v4H0z" fill="#e09a00" />
        <path d="M0 8h10l3-3h17v23H0z" fill="#ffcc3e" />
        <path d="M5 28v-5a2 2 0 0 1 2-2h16a2 2 0 0 1 2 2v5z" fill="#0f72c4" />
        <path d="M8 25h14" stroke="#0a4c90" strokeWidth="1.5" />
      </>
    ),
  },
  {
    name: 'Chrome',
    state: 'running',
    icon: (
      <>
        <circle cx="15" cy="15" r="15" fill="#ffcd40" />
        <path d="M15 0a15 15 0 0 1 13 7.500H15a7.500 7.500 0 0 0-6.500 11L2 7.500A15 15 0 0 1 15 0z" fill="#e33b2e" />
        <path d="M2 7.500 8.500 19a7.500 7.500 0 0 0 9 3L14 30A15 15 0 0 1 2 7.500z" fill="#1f9a4c" />
        <circle cx="15" cy="15" r="7.500" fill="#fff" />
        <circle cx="15" cy="15" r="6" fill="#2f78ee" />
      </>
    ),
  },
  {
    name: 'VS Code',
    icon: (
      <>
        <path d="M22 0 1 18v3l3 2L22 9z" fill="#0d6fb8" />
        <path d="M22 30 1 12V9l3-2 18 14z" fill="#1b87cf" />
        <path d="m21 0 9 3v24l-9 3z" fill="#29a4f2" />
      </>
    ),
  },
  {
    name: 'Arduino',
    icon: (
      <>
        <path d="M0 0h30v30H0z" fill="#0078d4" />
        <circle cx="15" cy="15" r="13.500" fill="#0d9a9f" />
        <g fill="none" stroke="#e4f6f6" strokeWidth="1.8">
          <circle cx="10" cy="15" r="4.300" />
          <circle cx="20" cy="15" r="4.300" />
          <path d="M8 15h4M18 15h4M20 13v4" strokeWidth="1.2" />
        </g>
      </>
    ),
  },
  {
    name: 'Cura',
    state: 'running',
    icon: (
      <>
        <path d="M10 2h18v22l-5 5H3V9z" fill="#1667f0" stroke="#f4f7fd" strokeWidth="2" />
        <path d="M19 11c-7-3-9 1-9 4.500s3 7 9 4" fill="none" stroke="#f0f4ff" strokeWidth="2" />
      </>
    ),
  },
  {
    name: 'Wave',
    icon: (
      <>
        <rect width="30" height="30" rx="6" fill="#22b1dc" />
        <path d="M1 17c3 5 7 2 10-1l5-1c4-1 9 1 13 4M4 19l6-1 1-2 4-3 2 2 2-4M13 16l-2-3M8 18l-1-2" fill="none" stroke="#fff" strokeWidth="1.5" />
      </>
    ),
  },
];

const TaskButton = ({ name, state, children }: { name: string; state?: string; children: React.ReactNode }) => (
  <button
    type="button"
    aria-label={name}
    className={`relative flex w-12 h-12 items-center justify-center rounded ${state === 'active' ? 'bg-[#edf1fb] shadow-sm' : ''}`}
  >
    {children}
    {state === 'running' && <span className="absolute bottom-0 h-1 w-2 rounded-full bg-[#757b86]" />}
    {state === 'active' && <span className="absolute bottom-0 h-1 w-5 rounded-full bg-[#0075d5]" />}
  </button>
);

const Taskbar = () => (
  <footer className="grid grid-cols-[1fr_auto_1fr] h-[60px] items-center border-t border-[#aab0ba] pb-0.5 bg-linear-to-r from-[#e3ecf8] via-[#d6e0f5] to-[#dfecf8] font-['Open_Sans',sans-serif] text-[14px] leading-5 text-[#1b1b1b]">
    <button type="button" className="flex items-center gap-1.5 pl-[25px] text-left">
      <svg width="33" height="36" viewBox="0 0 33 36">
        <circle cx="12" cy="17" r="11" fill="#f39a1f" />
        <path d="M9 31a5.500 5.500 0 0 1 0-11 8 8 0 0 1 14-2 6.500 6.500 0 0 1 3 13z" fill="#c6d3ee" />
        <circle cx="24" cy="9" r="9" fill="#c42b1c" />
        <text x="24" y="13" textAnchor="middle" fontSize="12" fill="#fff">1</text>
      </svg>
      <span>
        23°C
        <br />
        <span className="text-[#5c5f66]">Partly sunny</span>
      </span>
    </button>
    <div className="flex gap-[7px]">
      {apps.map(a => (
        <TaskButton key={a.name} name={a.name} state={a.state}>
          <svg width="30" height="30" viewBox="0 0 30 30">{a.icon}</svg>
        </TaskButton>
      ))}
      <TaskButton name="Fusion 360 launcher"><FusionLogo size={30} /></TaskButton>
      <TaskButton name="Fusion 360" state="active"><FusionLogo size={30} /></TaskButton>
    </div>
    <div className="flex items-center justify-end pr-[25px]">
      <button type="button" aria-label="Hidden icons" className="mr-[21px]"><ChevronUp size={20} strokeWidth={1.6} /></button>
      <svg width="18" height="18" viewBox="0 0 18 18" className="mr-[21px]">
        <circle cx="9" cy="9" r="8.500" fill="#3db4d8" stroke="#fff" />
        <path d="M7.500 4v8.500H13" fill="none" stroke="#fff" strokeWidth="2.2" />
        <path d="M6 5v8" stroke="#1c5a9a" strokeWidth="1.5" />
      </svg>
      <svg width="22" height="16" viewBox="0 0 22 16" className="mr-[22px]">
        <path d="M5 14.500a4 4 0 0 1 0-8A6.500 6.500 0 0 1 17 6a4.300 4.300 0 0 1 0 8.500z" fill="#9a9a9a" stroke="#222" strokeWidth="1.3" />
        <path d="M4 14c3-5 9-7 16-2 0 2-2 2-3 2z" fill="#e4e4e4" />
      </svg>
      <button type="button" className="mr-[21px] text-center">ENG<br />US</button>
      <button type="button" aria-label="Network, volume and battery" className="flex items-center gap-2 mr-6">
        <Wifi size={22} strokeWidth={1.8} />
        <Volume2 size={21} strokeWidth={1.5} />
        <svg width="20" height="16" viewBox="0 0 20 16">
          <rect x="2" y="4" width="15" height="11" rx="2" fill="none" stroke="#111" strokeWidth="1.5" />
          <path d="M6 6h9v7H4V9z" fill="#111" />
          <path d="M18 7.500v4" stroke="#111" strokeWidth="2.5" />
          <path d="M4 0 0 6h3l-1 4 5-6H4z" fill="#111" stroke="#dfeaf7" strokeWidth=".6" />
        </svg>
      </button>
      <button type="button" className="mr-[10px] text-right">12:31 PM<br />6/30/2023</button>
      <span className="flex w-5 h-5 items-center justify-center rounded-full bg-[#0067c0] text-xs text-white">4</span>
    </div>
  </footer>
);

const App: React.FC = () => (
  <div className="flex min-h-screen flex-col bg-[#f1f1f1] font-['Liberation_Sans',Arial,sans-serif]">
    <TitleBar />
    <QuickAccess />
    <Ribbon />
    <main className="relative flex flex-1 flex-col justify-between overflow-hidden bg-white p-[5px]">
      <SketchCanvas />
      <ViewCube />
      <BrowserPanel />
      <CanvasFooter />
    </main>
    <div className="h-[5px] bg-[#f0f0f0]" />
    <Taskbar />
  </div>
);

export default App;
